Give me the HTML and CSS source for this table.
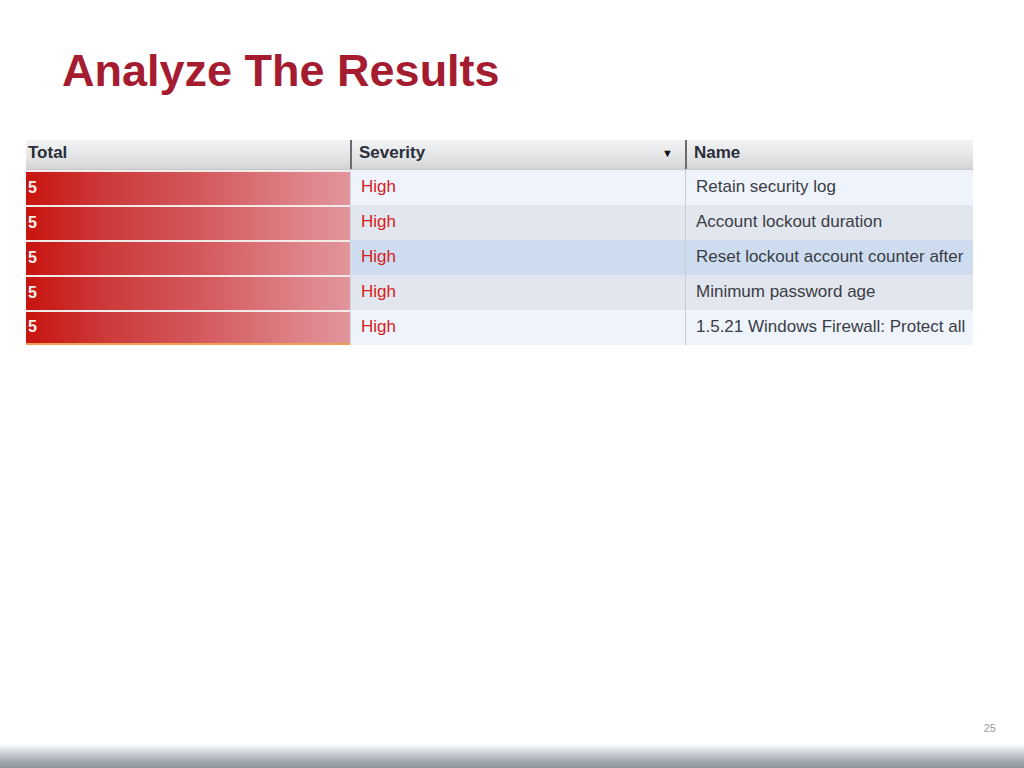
FILE: index.html
```html
<!DOCTYPE html>
<html>
<head>
<meta charset="utf-8">
<link rel="stylesheet" href="styles.css">
</head>
<body>
<div class="slide">
  <h1 class="title">Analyze The Results</h1>
  <div class="grid">
    <div class="head">
      <div class="hcell c1">Total</div>
      <div class="hcell c2">Severity <span class="arrow">&#9660;</span></div>
      <div class="hcell c3">Name</div>
    </div>
    <div class="row r-light">
      <div class="cell c1 total">5</div>
      <div class="cell c2 sev">High</div>
      <div class="cell c3">Retain security log</div>
    </div>
    <div class="row r-mid">
      <div class="cell c1 total">5</div>
      <div class="cell c2 sev">High</div>
      <div class="cell c3">Account lockout duration</div>
    </div>
    <div class="row r-sel">
      <div class="cell c1 total">5</div>
      <div class="cell c2 sev">High</div>
      <div class="cell c3">Reset lockout account counter after</div>
    </div>
    <div class="row r-mid">
      <div class="cell c1 total">5</div>
      <div class="cell c2 sev">High</div>
      <div class="cell c3">Minimum password age</div>
    </div>
    <div class="row r-light last">
      <div class="cell c1 total">5</div>
      <div class="cell c2 sev">High</div>
      <div class="cell c3">1.5.21 Windows Firewall: Protect all</div>
    </div>
  </div>
  <div class="spacer"></div>
  <div class="pagenum">25</div>
  <div class="footer"></div>
</div>
</body>
</html>
```
FILE: styles.css
```css
html, body {
  margin: 0;
  padding: 0;
  background: #ffffff;
}
.slide {
  width: 1024px;
  height: 768px;
  display: flex;
  flex-direction: column;
  font-family: "Liberation Sans", Arial, sans-serif;
  overflow: hidden;
}
.title {
  margin: 46px 0 0 62px;
  font-size: 45px;
  line-height: 50px;
  font-weight: bold;
  color: #a51c30;
}
.grid {
  margin: 44px 0 0 26px;
  width: 947px;
  display: flex;
  flex-direction: column;
}
.head {
  display: flex;
  height: 29px;
  background: linear-gradient(#f2f3f5, #e3e4e6 60%, #d3d4d6);
  border-bottom: 1px solid #c8c9cc;
}
.hcell {
  display: flex;
  align-items: center;
  font-size: 17px;
  font-weight: bold;
  color: #2a2e3a;
  padding-left: 2px;
  padding-bottom: 4px;
  box-sizing: border-box;
}
.c1 { width: 324px; }
.c2 { width: 335px; }
.c3 { flex: 1; }
.head .c2, .head .c3 { border-left: 2px solid #6a6c70; padding-left: 7px; }
.head .c2 { justify-content: space-between; padding-right: 12px; }
.arrow { font-size: 11px; color: #111; }
.row {
  display: flex;
  height: 35px;
}
.cell {
  display: flex;
  align-items: center;
  box-sizing: border-box;
  font-size: 17px;
  color: #3a3d44;
  padding-bottom: 2px;
}
.cell.c2 { padding-left: 10px; border-left: 1px solid #d4d8e0; }
.cell.c3 { padding-left: 10px; border-left: 1px solid #c8ccd4; }
.total {
  background: linear-gradient(90deg, #c8140f 0%, #cc3a3a 25%, #d45a5e 55%, #dc7c82 80%, #e2959c 100%);
  color: #f4f0f0;
  font-weight: bold;
  font-size: 16px;
  padding-left: 2px;
  border-top: 2px solid #f3eaea;
}
.r-light { background: #eef3fc; }
.r-mid { background: #e2e6ee; }
.r-sel { background: #cedcf0; }
.sev { color: #d42020; }
.last .total { border-bottom: 2px solid #f0a050; }
.spacer { flex: 1; }
.pagenum {
  align-self: flex-end;
  margin-right: 28px;
  margin-bottom: 10px;
  font-size: 11px;
  color: #9a9a9a;
}
.footer {
  height: 24px;
  background: linear-gradient(#ffffff, #d0d6da 35%, #a4adb3 70%, #8a959c);
}
```
